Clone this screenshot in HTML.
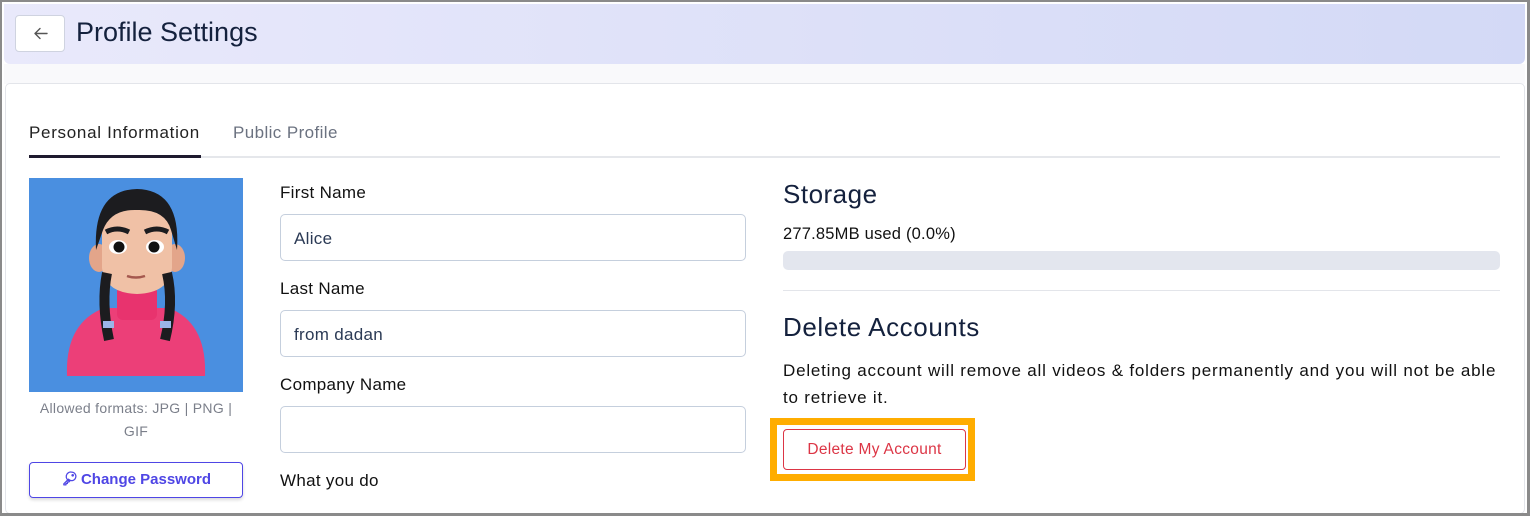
<!DOCTYPE html>
<html><head><meta charset="utf-8"><style>
*{box-sizing:border-box;margin:0;padding:0}
body{width:1530px;height:516px;overflow:hidden;background:#fff;font-family:"Liberation Sans",sans-serif;color:#1a1f36;position:relative}
.frame{position:absolute;left:0;top:0;width:1530px;height:516px;border:2px solid #8a8a8a;border-right-width:3px;border-bottom-width:3px}
.hdr{position:absolute;left:4px;top:4px;width:1521px;height:60px;border-radius:0 0 6px 6px;background:linear-gradient(90deg,#e9e9fb,#d3d9f6)}
.back{position:absolute;left:15px;top:15px;width:50px;height:37px;border:1px solid #cfd3e0;border-radius:4px;background:#fff}
.title{position:absolute;left:76px;top:17px;font-size:27px;color:#14213d}
.strip{position:absolute;left:4px;top:64px;width:1521px;height:20px;background:#f9f9fb}
.card{position:absolute;left:5px;top:83px;width:1520px;height:431px;border:1px solid #e3e5ea;border-radius:5px;background:#fff}
.abs{position:absolute}
.tab1{left:29px;top:123px;font-size:17px;color:#222;letter-spacing:0.7px}
.tab2{left:233px;top:123px;font-size:17px;color:#6b7280;letter-spacing:0.4px}
.tabline{left:29px;top:156px;width:1471px;height:2px;background:#e5e7eb}
.tabact{left:29px;top:155px;width:172px;height:3px;background:#1e1a2e}
.lbl{font-size:17px;color:#111;letter-spacing:0.3px}
.inp{left:280px;width:466px;height:47px;border:1px solid #c5cfdd;border-radius:5px;padding:0 0 0 13px;font-size:17px;line-height:47px;color:#2b3a55;letter-spacing:0.3px}
.btnpw{left:29px;top:462px;width:214px;height:36px;border:1px solid #4f46e5;border-radius:4px;color:#4f46e5;font-weight:bold;font-size:15px;line-height:34px;text-align:center;box-shadow:0 2px 3px rgba(0,0,0,.15)}
</style></head><body>
<div class="hdr"></div>
<div class="back"><svg width="50" height="37" viewBox="0 0 50 37"><path d="M31 17.5H19M24 12.5l-5 5 5 5" fill="none" stroke="#555" stroke-width="1.4" stroke-linecap="round" stroke-linejoin="round"/></svg></div>
<div class="title">Profile Settings</div>
<div class="strip"></div>
<div class="card"></div>
<div class="abs tab1">Personal Information</div>
<div class="abs tab2">Public Profile</div>
<div class="abs tabline"></div>
<div class="abs tabact"></div>

<svg class="abs" style="left:29px;top:178px" width="214" height="214" viewBox="0 0 214 214">
<rect width="214" height="214" fill="#4a8fe0"/>
<path d="M38 198 Q36 145 75 130 L140 130 Q178 145 176 198 Z" fill="#ec3f78"/>
<rect x="88" y="108" width="40" height="34" rx="6" fill="#e8336e"/>
<ellipse cx="70" cy="80" rx="10" ry="14" fill="#e3a58a"/>
<ellipse cx="146" cy="80" rx="10" ry="14" fill="#e3a58a"/>
<path d="M73 50 Q73 30 108 30 Q143 30 143 55 L143 90 Q140 115 108 116 Q76 115 73 90 Z" fill="#f0c1a6"/>
<path d="M67 72 Q64 12 108 11 Q152 12 148 72 L142 52 Q136 31 108 32 Q82 31 74 52 Z" fill="#1c1c1f"/>
<path d="M78 95 Q72 125 80 162" stroke="#1c1c1f" stroke-width="10" fill="none"/>
<path d="M138 95 Q145 125 136 162" stroke="#1c1c1f" stroke-width="10" fill="none"/>
<rect x="74" y="143" width="11" height="7" fill="#9bb4e8"/>
<rect x="131" y="143" width="11" height="7" fill="#9bb4e8"/>
<path d="M77 54 Q88 48 100 54 M116 54 Q128 48 139 54" stroke="#1c1c1f" stroke-width="5" fill="none"/>
<ellipse cx="89" cy="69" rx="9" ry="7" fill="#fff"/><circle cx="90" cy="69" r="5.5" fill="#111"/>
<ellipse cx="126" cy="69" rx="9" ry="7" fill="#fff"/><circle cx="125" cy="69" r="5.5" fill="#111"/>
<path d="M98 98 Q107 101 116 98" stroke="#a5584e" stroke-width="2.5" fill="none"/>
</svg>
<div class="abs" style="left:29px;top:397px;width:214px;text-align:center;font-size:14px;line-height:23px;color:#7b7f8a;letter-spacing:0.3px">Allowed formats: JPG | PNG |<br>GIF</div>
<div class="abs btnpw"><svg width="17" height="17" viewBox="0 0 24 24" style="vertical-align:-3px;margin-right:3px"><path d="M15 3a6 6 0 1 1-4.5 10L4 19.5V21h3v-2h2v-2h2l1.5-1.5A6 6 0 0 1 15 3zM16.5 6.5a1 1 0 1 0 .01 0" fill="none" stroke="#4f46e5" stroke-width="1.8" stroke-linejoin="round"/></svg>Change Password</div>

<div class="abs lbl" style="left:280px;top:183px">First Name</div>
<div class="abs inp" style="top:214px">Alice</div>
<div class="abs lbl" style="left:280px;top:279px">Last Name</div>
<div class="abs inp" style="top:310px">from dadan</div>
<div class="abs lbl" style="left:280px;top:375px">Company Name</div>
<div class="abs inp" style="top:406px"></div>
<div class="abs lbl" style="left:280px;top:471px">What you do</div>

<div class="abs" style="left:783px;top:179px;font-size:26px;color:#14213d;letter-spacing:0.5px">Storage</div>
<div class="abs" style="left:783px;top:225px;font-size:16.5px;color:#111;letter-spacing:0.2px">277.85MB used (0.0%)</div>
<div class="abs" style="left:783px;top:251px;width:717px;height:19px;border-radius:5px;background:#e3e6ee"></div>
<div class="abs" style="left:783px;top:290px;width:717px;height:1px;background:#e3e5ea"></div>
<div class="abs" style="left:783px;top:312px;font-size:26px;color:#14213d;letter-spacing:0.6px">Delete Accounts</div>
<div class="abs" style="left:783px;top:357px;font-size:17px;line-height:27px;color:#111;white-space:nowrap;letter-spacing:0.8px">Deleting account will remove all videos &amp; folders permanently and you will not be able<br>to retrieve it.</div>
<div class="abs" style="left:770px;top:418px;width:205px;height:63px;border:7px solid #ffad00;background:#fff"></div>
<div class="abs" style="left:783px;top:429px;width:183px;height:41px;border:1px solid #dc3545;border-radius:4px;color:#dc3545;font-size:15.5px;line-height:39px;text-align:center;letter-spacing:0.3px">Delete My Account</div>
<div class="frame"></div>
</body></html>
